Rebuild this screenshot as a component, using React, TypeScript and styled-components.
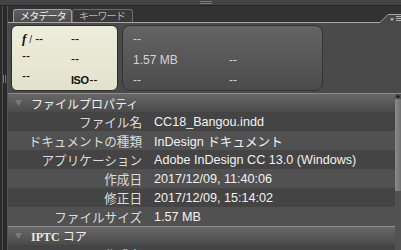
import React from "react";
import styled, { createGlobalStyle } from "styled-components";

const Global = createGlobalStyle`
  html, body { margin: 0; padding: 0; background: #4a4a4a; }
  body {
    width: 401px; height: 250px; overflow: hidden;
    font-family: "Liberation Sans", "Noto Sans CJK JP", sans-serif;
  }
`;

const Frame = styled.div`
  width: 401px; height: 250px; overflow: hidden;
  display: flex; flex-direction: column; background: #4a4a4a;
`;

const TopBar = styled.div`
  height: 5px; flex: none; background: #444;
  border-bottom: 1px solid #262626;
  display: flex; align-items: center; padding-left: 200px;
`;

const TopGrip = styled.div`
  width: 12px; height: 1px;
  border-top: 1px solid #7a7a7a; border-bottom: 1px solid #7a7a7a;
`;

const Body = styled.div`
  flex: 1; display: flex; min-height: 0;
`;

const LeftStrip = styled.div`
  width: 8px; flex: none;
  background: linear-gradient(to right, #2b2b2b 0 2px, #505050 2px 3px, #2a2a2a 3px 7px, #555 7px 8px);
  display: flex; justify-content: center; padding-top: 69px; box-sizing: border-box;
`;

const SideGrip = styled.div`
  width: 1px; height: 8px; margin-left: 1px;
  border-left: 1px solid #777; border-right: 1px solid #777;
`;

const Main = styled.div`
  flex: 1; display: flex; flex-direction: column; min-width: 0;
`;

const TabStrip = styled.div`
  height: 17px; flex: none; display: flex; background: #323232;
`;

const TabsArea = styled.div`
  flex: 1; display: flex; align-items: flex-end;
  padding-left: 5px; border-bottom: 1px solid #a8a8a8;
`;

const Tab = styled.div<{ $active?: boolean; $w: number }>`
  width: ${(p) => p.$w}px; height: 13px; box-sizing: border-box;
  border: 1px solid ${(p) => (p.$active ? "#a0a0a0" : "#6c6c6c")};
  border-bottom: none; border-radius: 3px 3px 0 0;
  background: ${(p) => (p.$active ? "linear-gradient(#5e5e5e, #4c4c4c)" : "#393939")};
  color: ${(p) => (p.$active ? "#f4f4f4" : "#b4b4b4")};
  font-size: 10px; line-height: 12px; padding-left: 6px; letter-spacing: -0.8px;
  font-family: "Noto Sans CJK JP", sans-serif; white-space: nowrap; overflow: hidden;
`;

const Corner = styled.div`
  width: 21px; flex: none; display: flex;
`;

const CardsArea = styled.div`
  height: 70px; flex: none; box-sizing: border-box;
  padding: 2px 0 0 3px; display: flex; gap: 4px; align-items: flex-start;
`;

const LightCard = styled.div`
  width: 107px; height: 66px; box-sizing: border-box;
  border: 1px solid #2e2e2a; border-radius: 6px;
  background: linear-gradient(#ededdc, #e2e2cc);
  display: flex; padding: 6px 0 0 10px; color: #111;
`;

const DarkCard = styled.div`
  width: 201px; height: 66px; box-sizing: border-box;
  border: 1px solid #333; border-radius: 8px;
  background: linear-gradient(#646464, #4b4b4b);
  display: flex; padding: 6px 0 0 10px; color: #d4d4d4;
`;

const Col = styled.div<{ $rows: string; $w: number }>`
  width: ${(p) => p.$w}px; display: grid; grid-template-rows: ${(p) => p.$rows};
  align-items: center; font-size: 12px; line-height: 14px; white-space: nowrap;
`;

const FStop = styled.span`
  font-family: "Liberation Serif", serif; font-style: italic; font-weight: bold; font-size: 13px;
  margin-right: 3px;
`;

const Slash = styled.span`
  font-size: 10px; margin-right: 3px; color: #333;
`;

const Iso = styled.span`
  font-weight: bold; font-size: 11px; letter-spacing: -0.5px; margin-right: 1px;
  font-family: "Liberation Sans Narrow", "Liberation Sans", sans-serif;
`;

const Content = styled.div`
  flex: 1; display: flex; min-height: 0;
`;

const List = styled.div`
  flex: 1; display: flex; flex-direction: column; min-width: 0;
`;

const SectionHeader = styled.div`
  height: 19px; flex: none; box-sizing: border-box;
  border-top: 1px solid #8c8c8c;
  background: linear-gradient(#676767, #4a4a4a);
  display: flex; align-items: center; padding-left: 7px; gap: 9px;
  color: #f0f0f0; font-size: 12px;
`;

const Triangle = styled.svg`
  width: 7px; height: 6px; flex: none;
`;

const Serif = styled.span`
  font-family: "Liberation Serif", serif; font-weight: bold; margin-right: 3px; color: #e8e8e8;
`;

const Row = styled.div<{ $dark: boolean }>`
  height: 19px; flex: none; display: grid;
  grid-template-columns: 134px 1fr; column-gap: 12px; align-items: center;
  background: ${(p) => (p.$dark ? "#444" : "#515151")};
  font-size: 12.6px; white-space: nowrap;
`;

const Label = styled.span`
  text-align: right; color: #dcdcdc;
`;

const Value = styled.span`
  color: #f2f2f2;
`;

const Scrollbar = styled.div`
  width: 6px; flex: none; background: #525252;
  display: flex; flex-direction: column; align-items: stretch;
  border-top: 1px solid #8c8c8c;
`;

const ArrowUp = styled.svg`
  width: 6px; height: 4px; flex: none; display: block;
`;

const Thumb = styled.div`
  height: 92px; flex: none; margin-top: 1px;
  background: linear-gradient(to right, #8a8a8a, #707070);
  border-radius: 1px;
`;

const rows = [
  ["ファイル名", "CC18_Bangou.indd"],
  ["ドキュメントの種類", "InDesign ドキュメント"],
  ["アプリケーション", "Adobe InDesign CC 13.0 (Windows)"],
  ["作成日", "2017/12/09, 11:40:06"],
  ["修正日", "2017/12/09, 15:14:02"],
  ["ファイルサイズ", "1.57 MB"],
];

const Tri = () => (
  <Triangle viewBox="0 0 7 6">
    <polygon points="0,0 7,0 3.5,6" fill="#7a7a7a" />
  </Triangle>
);

export default function App() {
  return (
    <Frame>
      <Global />
      <TopBar>
        <TopGrip />
      </TopBar>
      <Body>
        <LeftStrip>
          <SideGrip />
        </LeftStrip>
        <Main>
          <TabStrip>
            <TabsArea>
              <Tab $active $w={59}>メタデータ</Tab>
              <Tab $w={61}>キーワード</Tab>
            </TabsArea>
            <Corner>
              <svg width="21" height="17" viewBox="0 0 21 17">
                <polygon points="0,17 8,9 21,9 21,17" fill="#484848" />
                <polyline points="0,16.5 8,8.5 21,8.5" fill="none" stroke="#a8a8a8" strokeWidth="1" />
                <polygon points="10,12.5 14,12.5 12,15" fill="#c8c8c8" />
                <rect x="16" y="10" width="5" height="1" fill="#b0b0b0" />
                <rect x="16" y="12" width="5" height="1" fill="#b0b0b0" />
                <rect x="16" y="14" width="5" height="1" fill="#b0b0b0" />
              </svg>
            </Corner>
          </TabStrip>
          <CardsArea>
            <LightCard>
              <Col $w={49} $rows="14px 19px 22px">
                <span>
                  <FStop>f</FStop>
                  <Slash>/</Slash>--
                </span>
                <span>--</span>
                <span>--</span>
              </Col>
              <Col $w={40} $rows="14px 26px 16px">
                <span>--</span>
                <span>--</span>
                <span>
                  <Iso>ISO</Iso>--
                </span>
              </Col>
            </LightCard>
            <DarkCard>
              <Col $w={96} $rows="14px 28px 12px">
                <span>--</span>
                <span>1.57 MB</span>
                <span>--</span>
              </Col>
              <Col $w={60} $rows="14px 28px 12px">
                <span></span>
                <span>--</span>
                <span>--</span>
              </Col>
            </DarkCard>
          </CardsArea>
          <Content>
            <List>
              <SectionHeader>
                <Tri />
                <span>ファイルプロパティ</span>
              </SectionHeader>
              {rows.map(([l, v], i) => (
                <Row key={l} $dark={i % 2 === 0}>
                  <Label>{l}</Label>
                  <Value>{v}</Value>
                </Row>
              ))}
              <SectionHeader>
                <Tri />
                <span>
                  <Serif>IPTC</Serif>コア
                </span>
              </SectionHeader>
              <Row $dark>
                <Label>作成者</Label>
                <Value></Value>
              </Row>
            </List>
            <Scrollbar>
              <ArrowUp viewBox="0 0 6 4">
                <polygon points="1,3.5 5,3.5 3,0.5" fill="#111" />
              </ArrowUp>
              <Thumb />
            </Scrollbar>
          </Content>
        </Main>
      </Body>
    </Frame>
  );
}
